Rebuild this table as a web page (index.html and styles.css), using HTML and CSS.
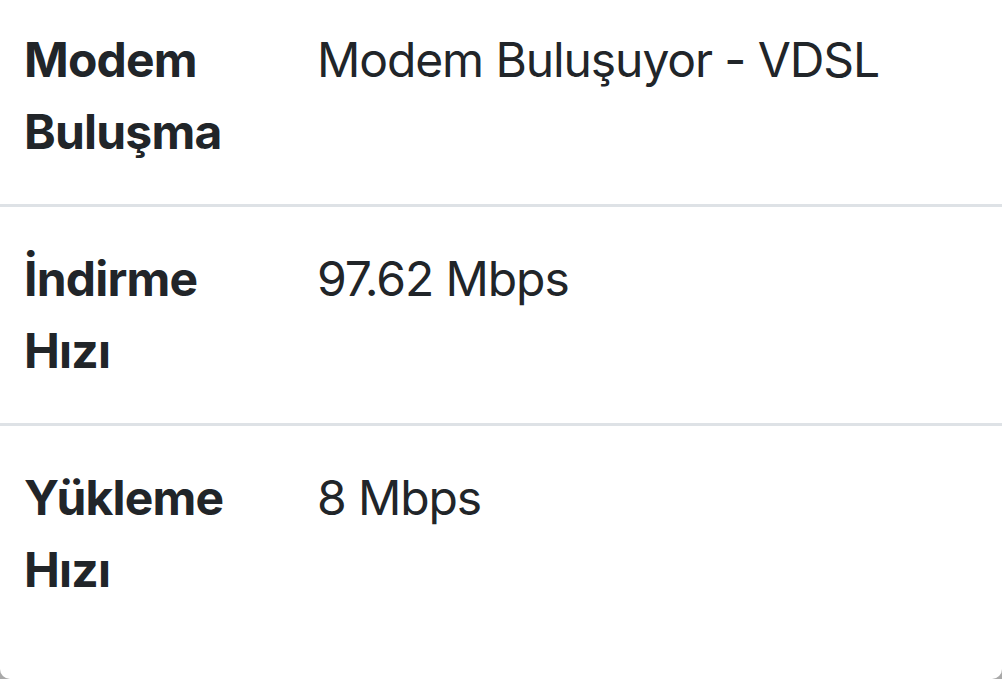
FILE: index.html
```html
<!DOCTYPE html>
<html lang="tr">
<head>
<meta charset="utf-8">
<link rel="stylesheet" href="styles.css">
</head>
<body>
<div class="card">
  <div class="row first">
    <div class="label">Modem Buluşma</div>
    <div class="value">Modem Buluşuyor - VDSL</div>
  </div>
  <div class="row">
    <div class="label">İndirme Hızı</div>
    <div class="value">97.62 Mbps</div>
  </div>
  <div class="row last">
    <div class="label">Yükleme Hızı</div>
    <div class="value">8 Mbps</div>
  </div>
</div>
</body>
</html>
```

FILE: styles.css
```css
html, body {
  margin: 0;
  padding: 0;
}
body {
  background: #a9a9a9;
  width: 1002px;
  height: 679px;
  overflow: hidden;
  font-family: Inter, "Noto Sans", sans-serif;
  font-size: 48px;
  line-height: 72px;
  color: #212529;
}
.card {
  background: #fff;
  height: 679px;
  border-radius: 0 0 10px 10px;
  box-sizing: border-box;
}
.row {
  display: grid;
  grid-template-columns: 293px 1fr;
  padding: 36px 0 36px 24px;
  border-bottom: 3px solid #dee2e6;
}
.row.first {
  padding-top: 24px;
}
.row.last {
  border-bottom: none;
}
.label {
  font-weight: 700;
  width: 221px;
  letter-spacing: -0.8px;
}
.value {
  font-weight: 400;
  letter-spacing: -1.1px;
}
```
